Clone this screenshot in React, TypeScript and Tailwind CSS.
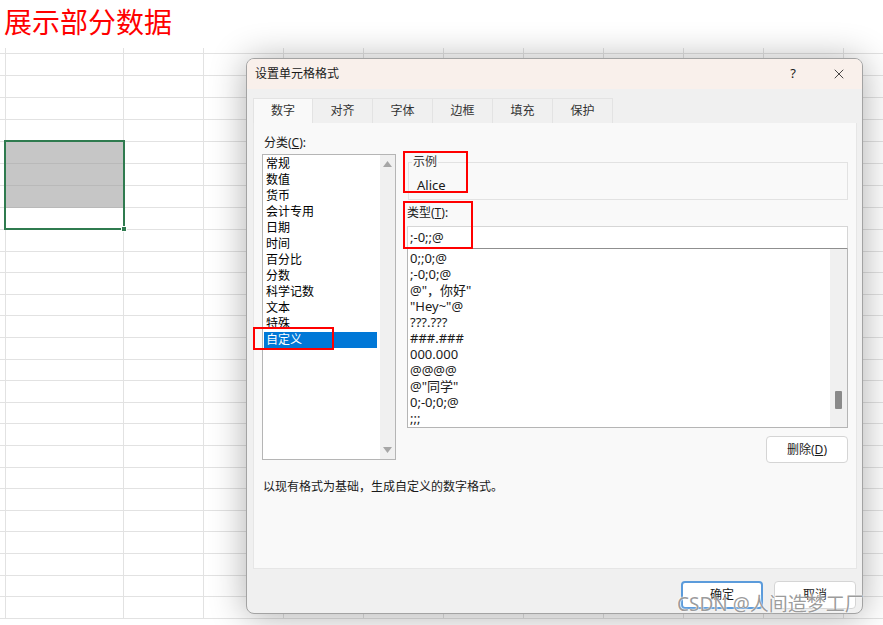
import { X } from "lucide-react"

const ROWS = [6, 22, 22, 22, 22, 22, 22, 22, 22, ...Array(18).fill(21.6)]
const COLS = [6, 118, 80, 80, 80, 80, 80, 80, 80, 80, 80, 80]

const CATEGORIES = [
  "常规",
  "数值",
  "货币",
  "会计专用",
  "日期",
  "时间",
  "百分比",
  "分数",
  "科学记数",
  "文本",
  "特殊",
  "自定义",
]

const FORMATS = [
  "0;;0;@",
  ";-0;0;@",
  "@\"，你好\"",
  "\"Hey~\"@",
  "???.???",
  "###.###",
  "000.000",
  "@@@@",
  "@\"同学\"",
  "0;-0;0;@",
  ";;;",
]

const TABS = ["数字", "对齐", "字体", "边框", "填充", "保护"]

function Sheet() {
  return (
    <div className="flex flex-col">
      {ROWS.map((h, r) => (
        <div key={r} className="flex" style={{ height: h }}>
          {COLS.map((w, c) => {
            const gray = c === 1 && r >= 5 && r <= 7
            return (
              <div
                key={c}
                style={{ width: w }}
                className={
                  gray
                    ? "shrink-0 h-full border-r border-b border-[#b9b9b9] bg-[#c6c6c6]"
                    : "shrink-0 h-full border-r border-b border-[#e2e2e2]"
                }
              />
            )
          })}
        </div>
      ))}
    </div>
  )
}

function Arrow({ down }: { down?: boolean }) {
  return (
    <svg width="9" height="6" viewBox="0 0 9 6">
      <polygon
        points={down ? "0,0 9,0 4.5,6" : "0,6 9,6 4.5,0"}
        fill="#a6a6a6"
      />
    </svg>
  )
}

function FormatDialog() {
  return (
    <div className="absolute left-[246px] top-[58px] w-[617px] h-[556px] rounded-lg border border-[#a3a3a3] bg-[#f0f0f0] shadow-[0_2px_36px_rgba(0,0,0,0.32)] overflow-hidden text-[12px] text-[#1a1a1a]">
      {/* title bar */}
      <div className="h-[30px] flex items-center bg-[#f9f0eb]">
        <span className="pl-[8px] flex-1">设置单元格格式</span>
        <span className="w-[46px] text-center text-[13px]">?</span>
        <span className="w-[46px] flex justify-center">
          <X size={16} strokeWidth={1.2} />
        </span>
      </div>

      <div className="pl-[6px] pt-[9px]">
        {/* tabs */}
        <div className="flex h-[25px]">
          {TABS.map((t, i) => (
            <div
              key={t}
              className={
                i === 0
                  ? "w-[60px] flex items-center justify-center bg-[#f9f9f9] border border-b-0 border-[#e3e3e3] text-[#333]"
                  : "w-[60px] flex items-center justify-center bg-[#f0f0f0] border-t border-r border-[#e3e3e3] text-[#333]"
              }
            >
              {t}
            </div>
          ))}
        </div>

        {/* tab panel */}
        <div className="w-[604px] h-[446px] bg-[#f9f9f9] border border-t-0 border-[#e6e6e6] flex flex-col">
          <div className="flex">
            {/* category column */}
            <div className="pl-[8px] pt-[12px] w-[153px]">
              <div className="leading-[16px] pl-[2px]">
                分类(<u>C</u>):
              </div>
              <div className="mt-[3px] w-[134px] h-[306px] border border-[#b5b5b5] bg-white flex">
                <div className="flex-1 pt-[1px] pl-[1px] pr-[3px]">
                  {CATEGORIES.map((c, i) => (
                    <div
                      key={c}
                      className={
                        i === CATEGORIES.length - 1
                          ? "h-[16px] leading-[16px] pl-[2px] bg-[#0078d7] text-white"
                          : "h-[16px] leading-[16px] pl-[2px] text-black"
                      }
                    >
                      {c}
                    </div>
                  ))}
                </div>
                <div className="w-[15px] bg-[#f0f0f0] flex flex-col items-center justify-between py-[6px]">
                  <Arrow />
                  <Arrow down />
                </div>
              </div>
            </div>

            {/* format column */}
            <div className="w-[441px] pt-[39px]">
              <div className="relative h-[38px] border border-[#e2e2e2] ml-[1px]">
                <span className="absolute -top-[9px] left-[3px] px-[1px] bg-[#f9f9f9] leading-[16px] text-[#333]">
                  示例
                </span>
                <span className="absolute left-[8px] top-[14px] leading-[16px] text-[13px]">
                  Alice
                </span>
              </div>
              <div className="mt-[5px] leading-[16px]">
                类型(<u>T</u>):
              </div>
              <div className="mt-[5px] h-[23px] bg-white border border-[#d6d6d6] border-b-[#8f8f8f] flex items-center pl-[2px] text-[13px]">
                ;-0;;@
              </div>
              <div className="h-[179px] bg-white border border-t-0 border-[#b5b5b5] flex">
                <div className="flex-1 pt-[1px] pl-[2px] text-[13px] overflow-hidden">
                  {FORMATS.map((f) => (
                    <div key={f} className="h-[16px] leading-[16px]">
                      {f}
                    </div>
                  ))}
                </div>
                <div className="w-[17px] bg-[#f0f0f0] pt-[142px] flex justify-center">
                  <div className="w-[7px] h-[18px] bg-[#8a8a8a] rounded-[1px]" />
                </div>
              </div>
              <div className="flex justify-end mt-[8px]">
                <button className="w-[82px] h-[27px] bg-white border border-[#d5d5d5] rounded-[4px]">
                  删除(<u>D</u>)
                </button>
              </div>
            </div>
          </div>
          <div className="mt-[16px] pl-[9px] leading-[16px]">
            以现有格式为基础，生成自定义的数字格式。
          </div>
        </div>

        {/* footer */}
        <div className="flex justify-end gap-[11px] pr-[6px] mt-[12px]">
          <button className="w-[82px] h-[28px] bg-white border-2 border-[#5b9bdb] rounded-[4px]">
            确定
          </button>
          <button className="w-[82px] h-[28px] bg-white border border-[#d5d5d5] rounded-[4px]">
            取消
          </button>
        </div>
      </div>
    </div>
  )
}

export default function App() {
  return (
    <div className="relative w-[883px] h-[625px] overflow-hidden bg-white font-['Segoe_UI','Noto_Sans','Noto_Sans_CJK_SC',sans-serif]">
      <div className="h-[48px] pl-[4px] text-[28px] leading-[48px] text-[#ff0000] font-['Liberation_Serif','Noto_Sans_CJK_SC',serif]">
        展示部分数据
      </div>
      <Sheet />

      {/* selected range */}
      <div className="absolute left-[4px] top-[140px] w-[121px] h-[90px] border-2 border-[#2f7b4f]" />
      <div className="absolute left-[121px] top-[226px] w-[6px] h-[6px] bg-[#2f7b4f] border border-white" />

      <FormatDialog />

      {/* red annotations */}
      <div className="absolute left-[403px] top-[151px] w-[65px] h-[42px] border-2 border-[#ff0000]" />
      <div className="absolute left-[403px] top-[201px] w-[70px] h-[48px] border-2 border-[#ff0000]" />
      <div className="absolute left-[253px] top-[327px] w-[81px] h-[23px] border-2 border-[#ff0000]" />

      {/* watermark */}
      <div className="absolute left-[677px] top-[593px] text-[19px] leading-[22px] text-[#8a8a8a]/85 [text-shadow:0_0_2px_#fff,0_0_1px_#fff]">
        CSDN @人间造梦工厂
      </div>
    </div>
  )
}
